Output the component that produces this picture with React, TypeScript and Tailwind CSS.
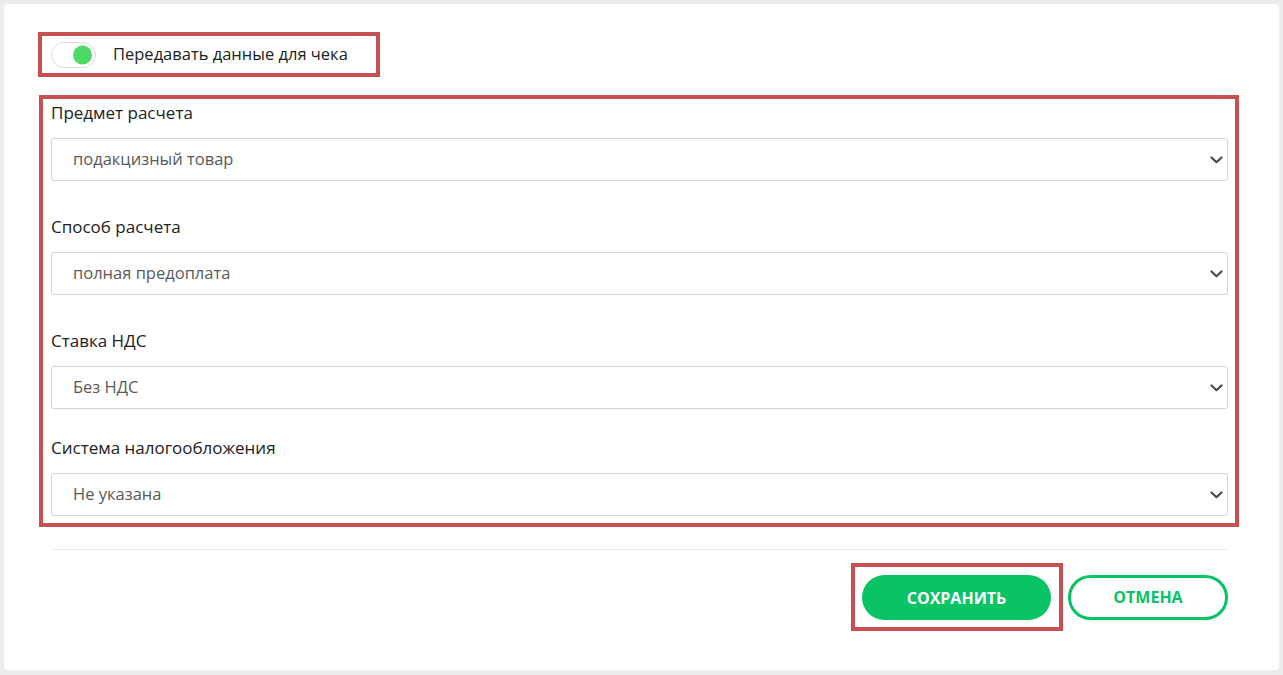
import { useState } from "react";

const fields = [
  {
    label: "Предмет расчета",
    value: "подакцизный товар",
    options: ["товар", "подакцизный товар", "работа", "услуга"],
    gap: "mb-[34px]",
  },
  {
    label: "Способ расчета",
    value: "полная предоплата",
    options: ["полная предоплата", "частичная предоплата", "аванс", "полный расчет"],
    gap: "mb-[34px]",
  },
  {
    label: "Ставка НДС",
    value: "Без НДС",
    options: ["Без НДС", "НДС 0%", "НДС 10%", "НДС 20%"],
    gap: "mb-[27px]",
  },
  {
    label: "Система налогообложения",
    value: "Не указана",
    options: ["Не указана", "ОСН", "УСН доход", "УСН доход - расход", "ЕСХН", "ПСН"],
    gap: "mb-0",
  },
];

function Chevron() {
  return (
    <svg
      className="pointer-events-none absolute right-[5px] top-1/2 -translate-y-1/2"
      width="13"
      height="8"
      viewBox="0 0 13 8"
      fill="none"
    >
      <path
        d="M1.5 1.5L6.5 6.2L11.5 1.5"
        stroke="#4a4a4a"
        strokeWidth="2.2"
        strokeLinecap="round"
        strokeLinejoin="round"
      />
    </svg>
  );
}

export default function App() {
  const [enabled, setEnabled] = useState(true);
  const [values, setValues] = useState(fields.map((f) => f.value));

  return (
    <div
      className="min-h-screen bg-[#ececec] p-1"
      style={{ fontFamily: '"Open Sans", "Noto Sans", sans-serif' }}
    >
      <div className="flex h-[666px] w-[1275px] flex-col rounded-[4px] bg-white pl-[34px] pt-[28px]">
        {/* Receipt toggle */}
        <div className="flex h-[45px] w-[342px] items-center border-4 border-[#c85050] pl-[9px]">
          <button
            onClick={() => setEnabled(!enabled)}
            className="relative h-[26px] w-[45px] shrink-0 rounded-full border border-[#dcdcdc] bg-white"
          >
            <span
              className={`absolute top-1/2 h-[19px] w-[19px] -translate-y-1/2 rounded-full ${
                enabled ? "right-[3px] bg-[#4cd964]" : "left-[3px] bg-[#cfcfcf]"
              }`}
            />
          </button>
          <span className="ml-[17px] text-[16.5px] font-medium text-[#222]">
            Передавать данные для чека
          </span>
        </div>

        {/* Receipt fields */}
        <div className="ml-px mt-[18px] w-[1200px] border-4 border-[#c85050] pb-[7px] pl-[8px] pr-[7px] pt-[2px]">
          {fields.map((f, i) => (
            <div key={f.label} className={f.gap}>
              <div className="mb-[13px] text-[17px] font-medium leading-6 text-[#222]">
                {f.label}
              </div>
              <div className="relative">
                <select
                  value={values[i]}
                  onChange={(e) => {
                    const next = [...values];
                    next[i] = e.target.value;
                    setValues(next);
                  }}
                  className="h-[43px] w-full appearance-none rounded-[3px] border border-[#d2d2d2] bg-white pl-[21px] text-[16.5px] text-[#5a5a5a] outline-none"
                >
                  {f.options.map((o) => (
                    <option key={o}>{o}</option>
                  ))}
                </select>
                <Chevron />
              </div>
            </div>
          ))}
        </div>

        <div className="ml-[13px] mt-[22px] h-px w-[1177px] bg-[#ebebeb]" />

        {/* Actions */}
        <div className="ml-[13px] mt-[13px] flex w-[1177px] items-center justify-end">
          <div className="border-4 border-[#c85050] pb-[7px] pl-[7px] pr-[8px] pt-[8px]">
            <button className="h-[45px] w-[189px] rounded-full bg-[#08c465] text-[16px] font-bold uppercase text-white">
              Сохранить
            </button>
          </div>
          <button className="ml-[5px] h-[45px] w-[160px] rounded-full border-[3px] border-[#08c465] bg-white text-[16px] font-bold uppercase text-[#08c465]">
            Отмена
          </button>
        </div>
      </div>
    </div>
  );
}
